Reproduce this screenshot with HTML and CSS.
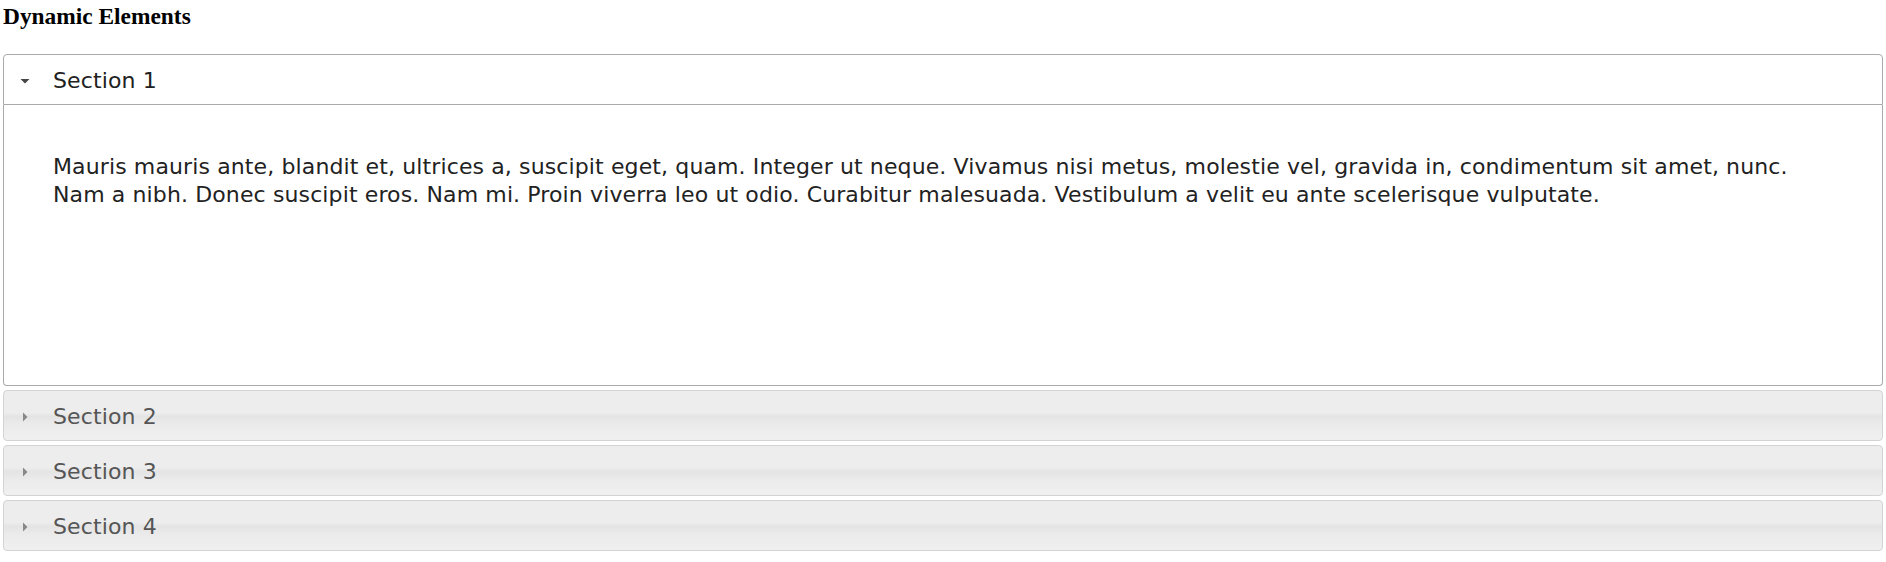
FILE: index.html
```html
<!DOCTYPE html>
<html>
<head>
<meta charset="utf-8">
<title>Dynamic Elements</title>
<link rel="stylesheet" href="styles.css">
</head>
<body>
<h3 class="page-title">Dynamic Elements</h3>
<div class="accordion">
  <h3 class="acc-header active">
    <svg class="acc-icon" width="16" height="16" viewBox="0 0 16 16"><polygon points="3.5,6 12.5,6 8,10.5" fill="#454545"/></svg>
    Section 1
  </h3>
  <div class="acc-content">
    <p>Mauris mauris ante, blandit et, ultrices a, suscipit eget, quam. Integer ut neque. Vivamus nisi metus, molestie vel, gravida in, condimentum sit amet, nunc. Nam a nibh. Donec suscipit eros. Nam mi. Proin viverra leo ut odio. Curabitur malesuada. Vestibulum a velit eu ante scelerisque vulputate.</p>
  </div>
  <h3 class="acc-header">
    <svg class="acc-icon" width="16" height="16" viewBox="0 0 16 16"><polygon points="6,3.5 10.5,8 6,12.5" fill="#888888"/></svg>
    Section 2
  </h3>
  <h3 class="acc-header">
    <svg class="acc-icon" width="16" height="16" viewBox="0 0 16 16"><polygon points="6,3.5 10.5,8 6,12.5" fill="#888888"/></svg>
    Section 3
  </h3>
  <h3 class="acc-header">
    <svg class="acc-icon" width="16" height="16" viewBox="0 0 16 16"><polygon points="6,3.5 10.5,8 6,12.5" fill="#888888"/></svg>
    Section 4
  </h3>
</div>
</body>
</html>
```

FILE: styles.css
```css
html, body {
  background: #ffffff;
}
body {
  margin: 3px;
  font-family: "Liberation Serif", serif;
}
.page-title {
  margin: 0 0 25px 0;
  font-size: 23.4px;
  font-weight: bold;
  color: #000;
  line-height: 26px;
}
.accordion {
  display: flex;
  flex-direction: column;
  font-family: "DejaVu Sans", Verdana, sans-serif;
  font-size: 22px;
  letter-spacing: 0.12px;
}
.acc-header {
  position: relative;
  margin: 4px 0 0 0;
  padding: 12px 11px 10px 49px;
  font-size: 22px;
  font-weight: normal;
  line-height: 27px;
  border: 1px solid #d3d3d3;
  border-radius: 4px;
  color: #555555;
  background: linear-gradient(to bottom, #ededed 0%, #ededed 44%, #e4e4e4 52%, #ebebeb 68%, #f0f0f0 100%);
}
.acc-header:first-child {
  margin-top: 0;
}
.acc-header.active {
  border-color: #aaaaaa;
  background: #ffffff;
  color: #212121;
  border-radius: 4px 4px 0 0;
}
.acc-icon {
  position: absolute;
  left: 13px;
  top: 50%;
  margin-top: -7px;
  width: 16px;
  height: 16px;
}
.acc-content {
  border: 1px solid #aaaaaa;
  border-top: 0;
  border-radius: 0 0 4px 4px;
  background: #ffffff;
  color: #222222;
  padding: 22px 49px;
  height: 236px;
}
.acc-content p {
  margin: 26px 0 22px 0;
  line-height: 28px;
}
```
